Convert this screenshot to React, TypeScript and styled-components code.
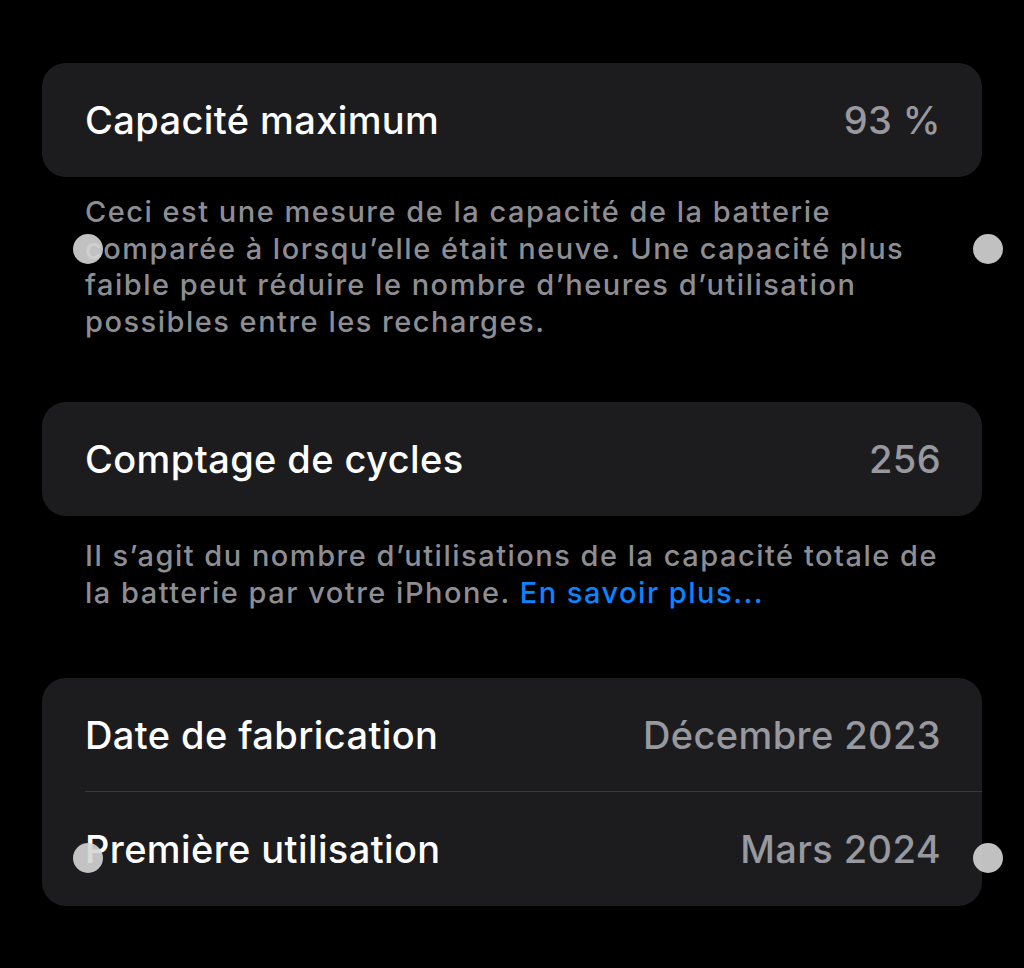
import styled, { createGlobalStyle } from "styled-components";

const GlobalStyle = createGlobalStyle`
  html, body {
    margin: 0;
    padding: 0;
    background: #000;
  }
  body {
    font-family: Inter, "Noto Sans", "Liberation Sans", sans-serif;
    -webkit-font-smoothing: antialiased;
  }
`;

const Page = styled.div`
  position: relative;
  width: 1024px;
  height: 968px;
  overflow: hidden;
  background: #000;
  padding: 63px 42px 0;
  box-sizing: border-box;
`;

const Group = styled.div`
  background: #1c1c1e;
  border-radius: 24px;
  overflow: hidden;
`;

const Row = styled.div<{ $divider?: boolean }>`
  position: relative;
  height: 114px;
  display: flex;
  align-items: center;
  justify-content: space-between;
  padding: 0 41px 0 43px;
  &::after {
    content: "";
    display: ${(p) => (p.$divider ? "block" : "none")};
    position: absolute;
    left: 43px;
    right: 0;
    bottom: 0;
    height: 1px;
    background: #38383a;
  }
`;

const Label = styled.span`
  color: #fff;
  font-size: 38px;
  font-weight: 500;
  letter-spacing: 0.4px;
`;

const Value = styled.span`
  color: #98989f;
  font-size: 38px;
  font-weight: 500;
  letter-spacing: 0.4px;
`;

const Footer = styled.p<{ $gap: number; $top: number }>`
  margin: 0;
  padding: ${(p) => p.$top}px 43px 0;
  height: ${(p) => p.$gap}px;
  box-sizing: border-box;
  color: #8d8d93;
  font-size: 29px;
  font-weight: 500;
  letter-spacing: 1.5px;
  line-height: 36.5px;
  white-space: nowrap;
`;

const Link = styled.span`
  color: #0a84ff;
`;

const Dot = styled.span<{ $x: number; $y: number }>`
  position: absolute;
  left: ${(p) => p.$x - 15}px;
  top: ${(p) => p.$y - 15}px;
  width: 30px;
  height: 30px;
  border-radius: 50%;
  background: rgba(214, 214, 214, 0.9);
`;

export default function App() {
  return (
    <Page>
      <GlobalStyle />
      <Group>
        <Row>
          <Label>Capacité maximum</Label>
          <Value>93 %</Value>
        </Row>
      </Group>
      <Footer $gap={225} $top={17}>
        Ceci est une mesure de la capacité de la batterie
        <br />
        comparée à lorsqu’elle était neuve. Une capacité plus
        <br />
        faible peut réduire le nombre d’heures d’utilisation
        <br />
        possibles entre les recharges.
      </Footer>
      <Group>
        <Row>
          <Label>Comptage de cycles</Label>
          <Value>256</Value>
        </Row>
      </Group>
      <Footer $gap={162} $top={22}>
        Il s’agit du nombre d’utilisations de la capacité totale de
        <br />
        la batterie par votre iPhone. <Link>En savoir plus...</Link>
      </Footer>
      <Group>
        <Row $divider>
          <Label>Date de fabrication</Label>
          <Value>Décembre 2023</Value>
        </Row>
        <Row>
          <Label>Première utilisation</Label>
          <Value>Mars 2024</Value>
        </Row>
      </Group>
      <Dot $x={88} $y={249} />
      <Dot $x={988} $y={249} />
      <Dot $x={88} $y={858} />
      <Dot $x={988} $y={858} />
    </Page>
  );
}
